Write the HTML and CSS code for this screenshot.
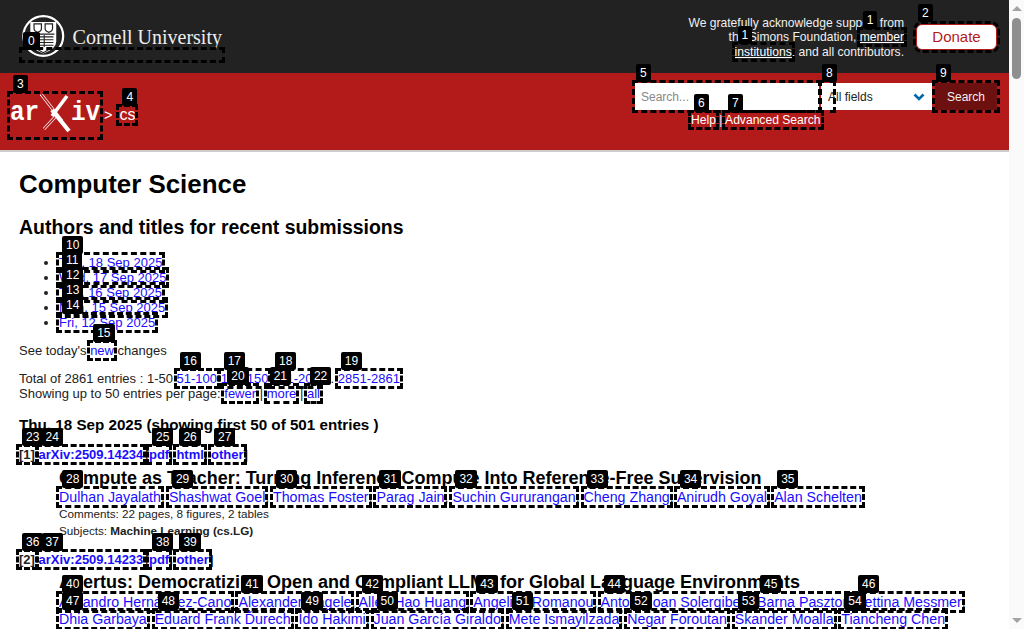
FILE: index.html
```html
<!DOCTYPE html>
<html lang="en">
<head>
    <meta charset="UTF-8">
    <meta name="viewport" content="width=device-width, initial-scale=1.0">
    <title>Computer Science</title>
    <link rel="stylesheet" href="styles.css">
</head>
<body>
    <div class="page">
        <header class="support-bar">
            <a class="mark cu-link" href="#">
                <span class="cu-art">
                    <svg class="seal" width="46" height="46" viewBox="0 0 46 46">
                        <circle cx="23" cy="23" r="21.5" fill="#222" stroke="#fff" stroke-width="2.4"/>
                        <path d="M9 8 H37 V29 Q37 37 23 42 Q9 37 9 29 Z" fill="#fff"/>
                        <path d="M13 10 H21 V15 Q21 18 17 19 Q13 18 13 15 Z M25 10 H33 V15 Q33 18 29 19 Q25 18 25 15 Z" fill="none" stroke="#222" stroke-width="1.3"/>
                        <path d="M11 21 H35 M18 24 H34 M18 27 H34 M18 30 H34 M18 33 H34 M24 22 V35" fill="none" stroke="#222" stroke-width="1.2"/>
                        <path d="M14 36 L23 41 L32 36" fill="none" stroke="#222" stroke-width="1.2"/>
                    </svg>
                    <span class="cu-name">Cornell University</span>
                </span>
                <span class="tag tag-cu">0</span>
            </a>
            <div class="support-right">
                <p class="support-text">We gratefully acknowledge support from<br>the Simons Foundation, <a class="mark" href="#">member<span class="tag">1</span></a><br><a class="mark" href="#">institutions<span class="tag">1</span></a>, and all contributors.</p>
                <a class="mark donate" href="#">Donate<span class="tag tag-donate">2</span></a>
            </div>
        </header>

        <div class="red-bar">
            <a class="mark logo" href="#">
                <span class="logo-text">ar</span>
                <svg class="logo-x" width="31" height="44" viewBox="0 0 31 44">
                    <path d="M1 0 L22 27" stroke="#fff" stroke-width="3" fill="none"/>
                    <path d="M1 0 L22 27" stroke="#b31b1b" stroke-width="1.6" fill="none"/>
                    <path d="M16 22 L4 35" stroke="#fff" stroke-width="3" fill="none"/>
                    <path d="M16 22 L4 35" stroke="#b31b1b" stroke-width="1.6" fill="none"/>
                    <path d="M27 2 L12 22" stroke="#fff" stroke-width="3.600" fill="none"/>
                    <path d="M12 16 L29 37" stroke="#fff" stroke-width="4.200" fill="none"/>
                </svg>
                <span class="logo-text">iv</span>
                <span class="tag">3</span>
            </a>
            <span class="crumb-sep">&gt;</span>
            <a class="mark crumb" href="#">cs<span class="tag">4</span></a>

            <div class="search-wrap">
                <form class="search-form">
                    <div class="mark field search-field">
                        <input class="search-input" type="text" placeholder="Search...">
                        <span class="tag tag-near">5</span>
                    </div>
                    <div class="select-box">
                        <span class="mark select-hit"><span class="tag tag-near">8</span></span>
                        <span class="select-label">All fields</span>
                        <svg class="chevron" width="12" height="8" viewBox="0 0 12 8">
                            <path d="M1.500 1.500 L6 6 L10.500 1.500" fill="none" stroke="#0068ac" stroke-width="2.600"/>
                        </svg>
                    </div>
                    <button class="mark search-btn" type="button">Search<span class="tag tag-near">9</span></button>
                </form>
                <p class="search-links"><a class="mark" href="#">Help<span class="tag">6</span></a> | <a class="mark" href="#">Advanced Search<span class="tag">7</span></a></p>
            </div>
        </div>

        <main class="content">
            <h1>Computer Science</h1>
            <h2>Authors and titles for recent submissions</h2>

            <ul class="days">
                <li><a class="mark" href="#">Thu, 18 Sep 2025<span class="tag">10</span></a></li>
                <li><a class="mark" href="#">Wed, 17 Sep 2025<span class="tag">11</span></a></li>
                <li><a class="mark" href="#">Tue, 16 Sep 2025<span class="tag">12</span></a></li>
                <li><a class="mark" href="#">Mon, 15 Sep 2025<span class="tag">13</span></a></li>
                <li><a class="mark" href="#">Fri, 12 Sep 2025<span class="tag">14</span></a></li>
            </ul>

            <p class="line today">See today's <a class="mark" href="#">new<span class="tag">15</span></a> changes</p>

            <p class="line total">Total of 2861 entries : 1-50 <a class="mark" href="#">51-100<span class="tag">16</span></a> <a class="mark" href="#">101-150<span class="tag">17</span></a> <a class="mark" href="#">151-200<span class="tag">18</span></a> ... <a class="mark" href="#">2851-2861<span class="tag">19</span></a></p>
            <p class="line">Showing up to 50 entries per page: <a class="mark" href="#">fewer<span class="tag">20</span></a> | <a class="mark" href="#">more<span class="tag">21</span></a> | <a class="mark" href="#">all<span class="tag">22</span></a></p>

            <h3>Thu, 18 Sep 2025 (showing first 50 of 501 entries )</h3>

            <dl class="entries">
                <dt class="first"><a class="mark num" href="#">[1]<span class="tag">23</span></a> <a class="mark" href="#">arXiv:2509.14234<span class="tag">24</span></a><span class="bracket">[</span><a class="mark" href="#">pdf<span class="tag">25</span></a>, <a class="mark" href="#">html<span class="tag">26</span></a>, <a class="mark" href="#">other<span class="tag">27</span></a>]</dt>
                <dd>
                    <div class="title">Compute as Teacher: Turning Inference Compute Into Reference-Free Supervision</div>
                    <div class="authors">
                        <a class="mark" href="#">Dulhan Jayalath<span class="tag">28</span></a>,
                        <a class="mark" href="#">Shashwat Goel<span class="tag">29</span></a>,
                        <a class="mark" href="#">Thomas Foster<span class="tag">30</span></a>,
                        <a class="mark" href="#">Parag Jain<span class="tag">31</span></a>,
                        <a class="mark" href="#">Suchin Gururangan<span class="tag">32</span></a>,
                        <a class="mark" href="#">Cheng Zhang<span class="tag">33</span></a>,
                        <a class="mark" href="#">Anirudh Goyal<span class="tag">34</span></a>,
                        <a class="mark" href="#">Alan Schelten<span class="tag">35</span></a>
                    </div>
                    <div class="meta">Comments: 22 pages, 8 figures, 2 tables</div>
                    <div class="meta">Subjects: <b>Machine Learning (cs.LG)</b></div>
                </dd>

                <dt class="second"><a class="mark num" href="#">[2]<span class="tag">36</span></a> <a class="mark" href="#">arXiv:2509.14233<span class="tag">37</span></a><span class="bracket">[</span><a class="mark" href="#">pdf<span class="tag">38</span></a>, <a class="mark" href="#">other<span class="tag">39</span></a>]</dt>
                <dd>
                    <div class="title">Apertus: Democratizing Open and Compliant LLMs for Global Language Environments</div>
                    <div class="authors">
                        <a class="mark" href="#">Alejandro Hernández-Cano<span class="tag">40</span></a>,
                        <a class="mark" href="#">Alexander Hägele<span class="tag">41</span></a>,
                        <a class="mark" href="#">Allen Hao Huang<span class="tag">42</span></a>,
                        <a class="mark" href="#">Angelika Romanou<span class="tag">43</span></a>,
                        <a class="mark" href="#">Antoni-Joan Solergibert<span class="tag">44</span></a>,
                        <a class="mark" href="#">Barna Pasztor<span class="tag">45</span></a>,
                        <a class="mark" href="#">Bettina Messmer<span class="tag">46</span></a>,
                        <a class="mark" href="#">Dhia Garbaya<span class="tag">47</span></a>,
                        <a class="mark" href="#">Eduard Frank Ďurech<span class="tag">48</span></a>,
                        <a class="mark" href="#">Ido Hakimi<span class="tag">49</span></a>,
                        <a class="mark" href="#">Juan García Giraldo<span class="tag">50</span></a>,
                        <a class="mark" href="#">Mete Ismayilzada<span class="tag">51</span></a>,
                        <a class="mark" href="#">Negar Foroutan<span class="tag">52</span></a>,
                        <a class="mark" href="#">Skander Moalla<span class="tag">53</span></a>,
                        <a class="mark" href="#">Tiancheng Chen<span class="tag">54</span></a>
                    </div>
                </dd>
            </dl>
        </main>
    </div>

    <div class="scrollbar">
        <span class="arrow-up"></span>
        <span class="thumb"></span>
        <span class="track"></span>
        <span class="arrow-down"></span>
    </div>
</body>
</html>
```

FILE: styles.css
```css
html, body {
    height: 100%;
}

body {
    margin: 0;
    display: flex;
    overflow: hidden;
    font-family: "Liberation Sans", Arial, sans-serif;
    font-size: 13px;
    color: #222;
    background-color: #fff;
}

a {
    color: #1a0dff;
    text-decoration: none;
}

p {
    margin: 0;
}

.page {
    flex: 1;
    min-width: 0;
    overflow: hidden;
}

/* annotation boxes and number badges */
.mark {
    position: relative;
    outline: 3px dashed #000;
}

.tag {
    position: absolute;
    left: 3px;
    top: -19px;
    z-index: 2;
    height: 18px;
    padding: 0 4px;
    border-radius: 2px;
    background-color: #000;
    color: #fff;
    font: 400 12px/18px "Liberation Sans", Arial, sans-serif;
    text-decoration: none;
    white-space: nowrap;
}

.tag-near {
    left: 1px;
}

/* top bar */
.support-bar {
    display: flex;
    justify-content: space-between;
    height: 73px;
    padding-left: 22px;
    background-color: #222;
    color: #f0f0f0;
}

.cu-link {
    display: block;
    width: 200px;
    height: 10px;
    margin-top: 50px;
    color: #fff;
}

.cu-art {
    display: flex;
    align-items: center;
    gap: 8px;
    margin-top: -37px;
}

.tag-cu {
    left: 1px;
    top: -18px;
    padding: 0 5px;
}

.cu-name {
    margin-top: 2px;
    font: 400 20px/1 "Liberation Serif", "Times New Roman", serif;
    color: #eee;
    white-space: nowrap;
}

.support-right {
    display: flex;
    align-items: flex-start;
    gap: 12px;
    padding-right: 12px;
}

.support-text {
    margin-top: 15.500px;
    font-size: 12.100px;
    line-height: 14.500px;
    text-align: right;
}

.support-text a {
    color: #fff;
    text-decoration: underline;
}

.donate {
    display: block;
    width: 81px;
    height: 26px;
    margin-top: 24px;
    box-sizing: border-box;
    border: 1px solid #b31b1b;
    border-radius: 6px;
    background-color: #fff;
    color: #b31b1b;
    font-size: 15px;
    line-height: 24px;
    text-align: center;
}

.tag-donate {
    left: 1px;
    top: -21px;
}

/* red bar */
.red-bar {
    display: flex;
    align-items: flex-start;
    height: 77px;
    padding-left: 10px;
    border-bottom: 2px solid #ccc;
    background-color: #b31b1b;
    color: #fff;
}

.logo {
    display: flex;
    align-items: center;
    width: 90px;
    height: 43px;
    margin-top: 21px;
}

.logo-text {
    margin: -6px -4px 0 0;
    color: #fff;
    font: 700 28px/1 "Liberation Mono", "Courier New", monospace;
    transform: scaleX(0.87);
    transform-origin: left center;
}

.logo-x {
    flex: none;
}

.crumb-sep {
    margin: 34px 0 0 4px;
    font-size: 14.500px;
    line-height: 16px;
}

.crumb {
    margin: 34px 0 0 7px;
    color: #fff;
    font-size: 16px;
    line-height: 16px;
}

.search-wrap {
    margin-left: auto;
    padding-right: 12px;
}

.search-form {
    display: flex;
    align-items: flex-start;
    margin-top: 10px;
}

.field {
    display: block;
    height: 27px;
}

.search-input {
    display: block;
    box-sizing: border-box;
    width: 184px;
    height: 27px;
    padding: 0 6px;
    border: none;
    background-color: #fff;
    font: 12px "Liberation Sans", Arial, sans-serif;
}

.search-input::placeholder {
    color: #888;
}

.select-box {
    display: flex;
    align-items: center;
    justify-content: space-between;
    box-sizing: border-box;
    width: 111px;
    height: 27px;
    margin-left: 2px;
    padding: 0 7px;
    background-color: #fff;
    color: #222;
    font-size: 12px;
}

.select-hit {
    position: absolute;
    display: block;
    width: 12px;
    height: 27px;
    margin-left: -7px;
}

.search-btn {
    width: 62px;
    height: 27px;
    margin-left: 3px;
    padding: 0;
    border: none;
    background-color: #6d1010;
    color: #f0f0f0;
    font: 12px "Liberation Sans", Arial, sans-serif;
}

.search-links {
    margin-top: 3px;
    padding-left: 56px;
    font-size: 12.100px;
    line-height: 15px;
    color: #eee;
}

.search-links a {
    color: #fff;
}

/* main content */
.content {
    padding-left: 19px;
}

h1 {
    margin: 17px 0 0;
    color: #000;
    font-size: 25.900px;
    line-height: 30px;
}

h2 {
    margin: 16px 0 0;
    color: #000;
    font-size: 19.450px;
    line-height: 24px;
}

h3 {
    margin: 15px 0 0;
    color: #000;
    font-size: 15.200px;
    line-height: 17px;
}

.days {
    margin: 16px 0 0;
    padding-left: 40px;
    line-height: 15px;
}

.line {
    line-height: 15px;
}

.today {
    margin-top: 13px;
}

.total {
    margin-top: 13px;
}

.entries {
    margin: 0;
}

dt {
    color: #000;
    font-weight: 700;
    line-height: 16px;
}

dt .num {
    color: #222;
}

.bracket {
    margin-left: 2px;
    font-weight: 400;
}

.first {
    margin-top: 14px;
}

.second {
    margin-top: 13px;
}

dd {
    margin: 0;
    padding-left: 40px;
}

.title {
    margin-top: 4px;
    color: #000;
    font-size: 18px;
    font-weight: 700;
    line-height: 22px;
}

.second + dd .title {
    margin-top: 3px;
}

.authors {
    font-size: 14.220px;
    line-height: 17px;
}

.second + dd .authors {
    margin-top: 1px;
}

.authors a {
    white-space: nowrap;
}

.authors + .meta {
    margin-top: -1px;
}

.meta {
    color: #222;
    font-size: 11.700px;
    line-height: 17px;
}

.meta b {
    color: #222;
}

/* page scrollbar */
.scrollbar {
    flex: none;
    display: flex;
    flex-direction: column;
    align-items: center;
    width: 15px;
    background-color: #fafafa;
}

.arrow-up {
    margin-top: 6px;
    border-left: 5px solid transparent;
    border-right: 5px solid transparent;
    border-bottom: 5px solid #a3a3a3;
}

.thumb {
    width: 9px;
    height: 61px;
    margin-top: 7px;
    border-radius: 5px;
    background-color: #8f8f8f;
}

.track {
    flex: 1;
}

.arrow-down {
    margin-bottom: 6px;
    border-left: 5px solid transparent;
    border-right: 5px solid transparent;
    border-top: 5px solid #a3a3a3;
}
```
